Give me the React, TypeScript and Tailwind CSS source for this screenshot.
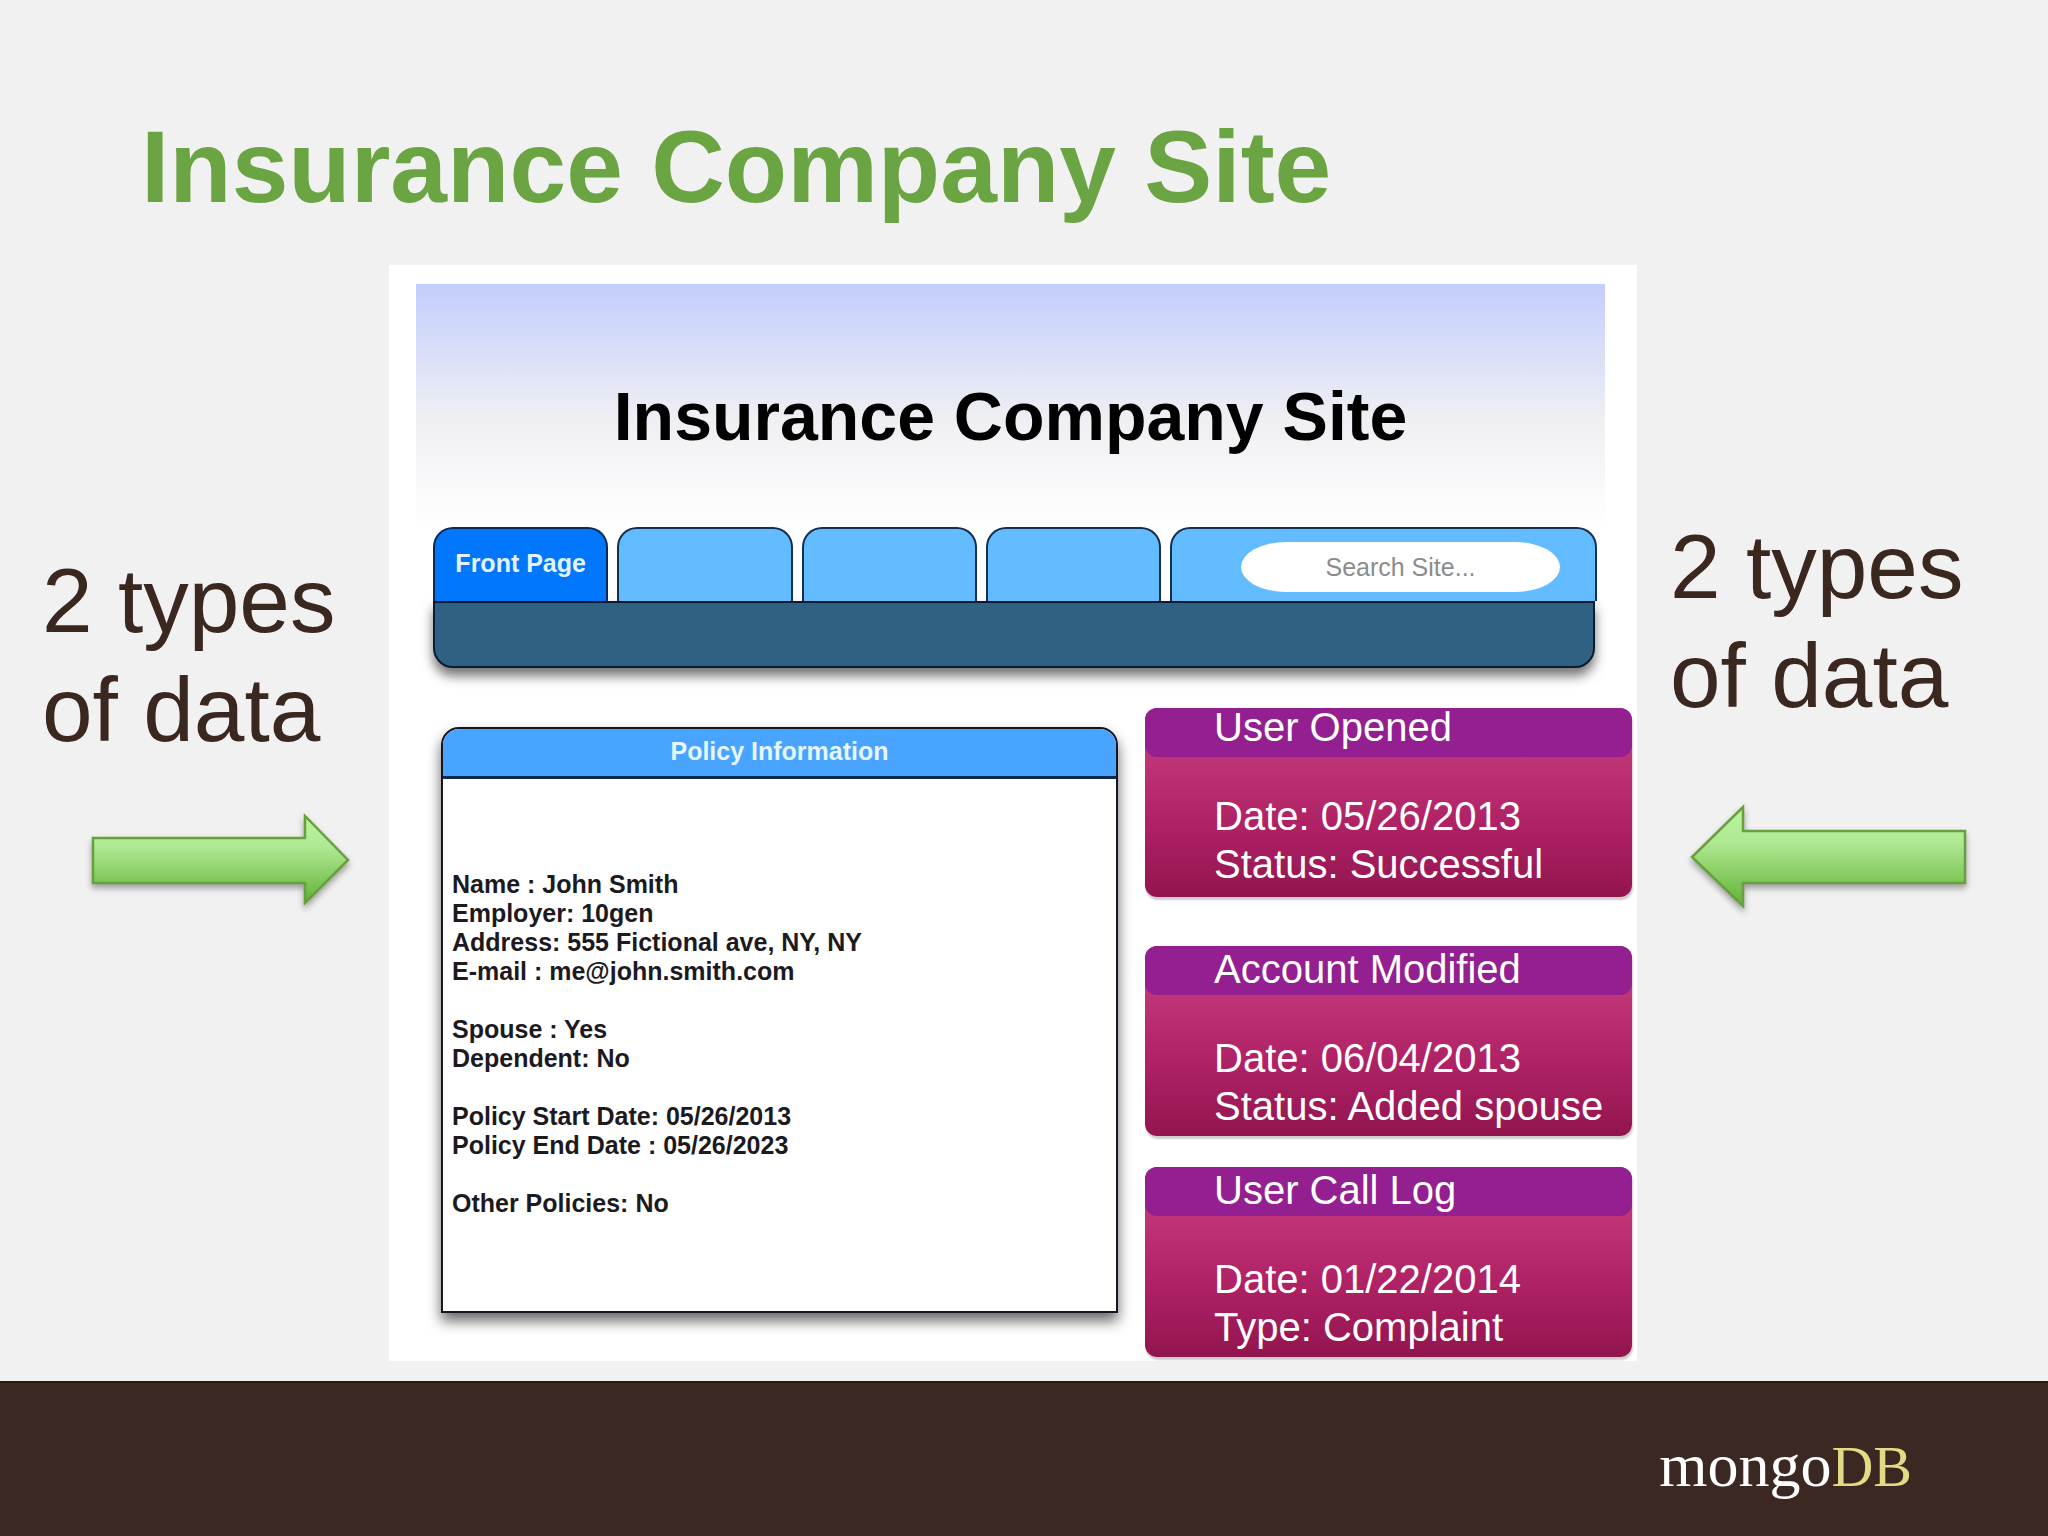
import React from "react";

interface EventCardProps {
  title: string;
  lines: string[];
  compact?: boolean;
}

const policyGroups = [
  [
    "Name : John Smith",
    "Employer: 10gen",
    "Address: 555 Fictional ave, NY, NY",
    "E-mail : me@john.smith.com",
  ],
  ["Spouse : Yes", "Dependent: No"],
  ["Policy Start Date: 05/26/2013", "Policy End Date : 05/26/2023"],
  ["Other Policies: No"],
];

const EventCard = ({ title, lines, compact }: EventCardProps) => {
  return (
    <article className="rounded-[12px] bg-linear-to-b from-[#c03577] from-25% via-[#ad2064] via-65% to-[#92154f] text-[40px] text-white shadow-[1px_3px_2px_rgba(0,0,0,0.2)]">
      <header className="h-[49px] rounded-[12px] bg-[#931f90] pl-[69px]">
        <h2 className={compact ? "leading-[38px]" : "leading-[46px]"}>{title}</h2>
      </header>
      <div
        className={
          compact
            ? "pt-[35px] pb-[9px] pl-[69px] leading-[48px]"
            : "pt-[39px] pb-[6px] pl-[69px] leading-[48px]"
        }
      >
        {lines.map((line) => (
          <p key={line} className="whitespace-nowrap">
            {line}
          </p>
        ))}
      </div>
    </article>
  );
};

const ArrowFill = ({ id }: { id: string }) => (
  <defs>
    <linearGradient id={id} x1="0" y1="0" x2="0" y2="1">
      <stop offset="0" stopColor="#baf59f" />
      <stop offset="0.35" stopColor="#b0e994" />
      <stop offset="1" stopColor="#62b135" />
    </linearGradient>
  </defs>
);

const RightArrow = () => (
  <svg
    width="258"
    height="94"
    viewBox="0 0 258 94"
    className="overflow-visible drop-shadow-[0_4px_3px_rgba(0,0,0,0.35)]"
    aria-hidden="true"
  >
    <ArrowFill id="right-arrow" />
    <path
      d="M1 25H213V3L256 47L213 90V70H1Z"
      fill="url(#right-arrow)"
      stroke="#66a13d"
      strokeWidth="2.5"
    />
  </svg>
);

const LeftArrow = () => (
  <svg
    width="276"
    height="106"
    viewBox="0 0 276 106"
    className="overflow-visible drop-shadow-[0_4px_3px_rgba(0,0,0,0.35)]"
    aria-hidden="true"
  >
    <ArrowFill id="left-arrow" />
    <path
      d="M275 27H53V3L2 53L53 102V79H275Z"
      fill="url(#left-arrow)"
      stroke="#66a13d"
      strokeWidth="2.5"
    />
  </svg>
);

const Tab = ({ label, active }: { label: string; active?: boolean }) => (
  <button
    type="button"
    aria-label={label || "Empty tab"}
    className={
      active
        ? "h-[74px] rounded-t-[20px] border-2 border-b-0 border-[#0b2a5c] bg-[#0077fc] pb-[2px] text-[25px] font-bold text-[#e4f4ff]"
        : "h-[74px] rounded-t-[20px] border-2 border-b-0 border-[#14304e] bg-[#63bcff]"
    }
  >
    {label}
  </button>
);

const SitePanel = () => {
  return (
    <section className="bg-white pt-[19px] pb-[4px]">
      <div className="mr-[32px] ml-[27px] h-[243px] bg-linear-to-b from-[#c3cdfd] via-[#efeff3] via-55% to-white pt-[92px]">
        <h2 className="text-center text-[68px] leading-[80px] font-bold text-black">
          Insurance Company Site
        </h2>
      </div>

      {/* Tabs and search */}
      <nav className="mr-[40px] ml-[44px]">
        <div className="grid grid-cols-[175fr_175fr_175fr_175fr_426fr] gap-[9px]">
          <Tab label="Front Page" active />
          <Tab label="" />
          <Tab label="" />
          <Tab label="" />
          <div className="flex h-[74px] items-center justify-end rounded-t-[20px] border-2 border-b-0 border-[#14304e] bg-[#63bcff] pt-[4px] pr-[35px]">
            <input
              type="text"
              aria-label="Search Site"
              placeholder="Search Site..."
              className="h-[50px] w-[319px] rounded-[45px/25px] bg-white text-center text-[25px] placeholder:text-[#8c8c8c] placeholder:opacity-100"
            />
          </div>
        </div>
        <div className="mr-[2px] h-[67px] rounded-b-[20px] border-2 border-[#0d1b30] bg-[#2f6183] shadow-[0_8px_12px_rgba(0,0,0,0.55)]" />
      </nav>

      <div className="mt-[40px] mr-[5px] ml-[52px] grid grid-cols-[677fr_487fr] items-start gap-[27px]">
        <section className="mt-[19px] rounded-t-[18px] border-2 border-[#15161f] bg-white shadow-[0_8px_14px_rgba(0,0,0,0.6)]">
          <h3 className="rounded-t-[16px] border-b-3 border-[#10294a] bg-[#49a4ff] pb-[2px] text-center text-[25px] leading-[45px] font-bold text-[#e4f6ff]">
            Policy Information
          </h3>
          <div className="flex flex-col gap-[29px] pt-[91px] pb-[93px] pl-[9px] text-[25px] leading-[29px] font-bold text-[#1c1a1f]">
            {policyGroups.map((group) => (
              <div key={group[0]}>
                {group.map((line) => (
                  <p key={line}>{line}</p>
                ))}
              </div>
            ))}
          </div>
        </section>

        <div className="flex flex-col">
          <EventCard
            title="User Opened"
            lines={["Date: 05/26/2013", "Status: Successful"]}
            compact
          />
          <div className="mt-[49px] flex flex-col gap-[31px]">
            <EventCard
              title="Account Modified"
              lines={["Date: 06/04/2013", "Status: Added spouse"]}
            />
            <EventCard
              title="User Call Log"
              lines={["Date: 01/22/2014", "Type: Complaint"]}
            />
          </div>
        </div>
      </div>
    </section>
  );
};

export default function App() {
  return (
    <div className="flex min-h-screen flex-col bg-[#f2f1f2] font-['Liberation_Sans',Arial,sans-serif]">
      <header className="pt-[107px] pb-[38px] pl-[141px]">
        <h1 className="text-[102px] leading-[120px] font-bold text-[#6ba543]">
          Insurance Company Site
        </h1>
      </header>

      <main className="grid grid-cols-[389fr_1248fr_411fr] pb-[20px] text-[#3a271f]">
        <aside className="pt-[281px] pl-[42px]">
          <p className="text-[91px] leading-[109px]">
            2 types
            <br />
            of data
          </p>
          <div className="mt-[49px] ml-[50px]">
            <RightArrow />
          </div>
        </aside>

        <SitePanel />

        <aside className="pt-[247px] pl-[33px]">
          <p className="text-[91px] leading-[109px]">
            2 types
            <br />
            of data
          </p>
          <div className="mt-[74px] ml-[20px]">
            <LeftArrow />
          </div>
        </aside>
      </main>

      <footer className="flex grow justify-end border-t-2 border-[#2a1a14] bg-[#3c2822] pt-[46px] pr-[136px] pb-[35px]">
        <p className="font-['Liberation_Serif',serif] text-[62px] leading-[72px] text-white">
          mongo<span className="text-[58px] text-[#e3da84]">DB</span>
        </p>
      </footer>
    </div>
  );
}
